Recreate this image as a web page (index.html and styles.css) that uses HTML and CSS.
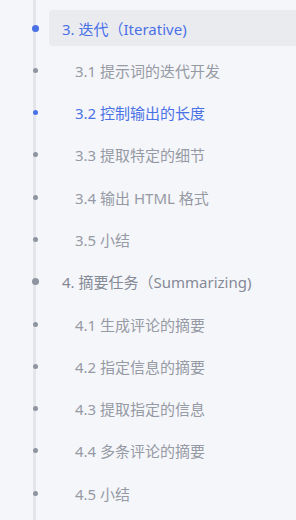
FILE: index.html
```html
<html>
<head>
<title>目录</title>
<link rel="stylesheet" href="styles.css">
</head>
<body>
<div id="Outline">
<ul class="toc">
<li class="item lvl1 active"><span class="dot"></span>3. 迭代（Iterative)</li>
<li class="item lvl2"><span class="dot"></span>3.1 提示词的迭代开发</li>
<li class="item lvl2 current"><span class="dot"></span>3.2 控制输出的长度</li>
<li class="item lvl2"><span class="dot"></span>3.3 提取特定的细节</li>
<li class="item lvl2"><span class="dot"></span>3.4 输出 HTML 格式</li>
<li class="item lvl2"><span class="dot"></span>3.5 小结</li>
<li class="item lvl1"><span class="dot"></span>4. 摘要任务（Summarizing)</li>
<li class="item lvl2"><span class="dot"></span>4.1 生成评论的摘要</li>
<li class="item lvl2"><span class="dot"></span>4.2 指定信息的摘要</li>
<li class="item lvl2"><span class="dot"></span>4.3 提取指定的信息</li>
<li class="item lvl2"><span class="dot"></span>4.4 多条评论的摘要</li>
<li class="item lvl2"><span class="dot"></span>4.5 小结</li>
</ul>
</div>
</body>
</html>
```

FILE: styles.css
```css
body { margin:0; overflow:hidden; background:#f5f6fa; font-family:"Noto Sans", "Noto Sans CJK SC", sans-serif; font-size:15px; color:#8c919c; }
#Outline { margin-left:33px; border-left:3px solid #e3e5ea; min-height:520px; padding-top:10px; }
.toc { list-style:none; margin:0; padding:0; display:flex; flex-direction:column; gap:6.3px; }
.item { position:relative; height:36px; display:flex; align-items:center; margin-left:13px; border-radius:4px 0 0 4px; white-space:nowrap; }
.lvl1 { padding-left:13px; color:#848a96; }
.lvl2 { padding-left:26px; color:#959aa4; }
.active { background:#eaebef; color:#4a72e6; }
.current { color:#4a72e6; }
.dot { position:absolute; top:50%; left:-16.5px; width:5px; height:5px; margin-top:-2.5px; border-radius:50%; background:#8e94a0; }
.lvl1 .dot { left:-17.5px; width:7px; height:7px; margin-top:-3.5px; }
.active .dot, .current .dot { background:#4a72e6; }
```
